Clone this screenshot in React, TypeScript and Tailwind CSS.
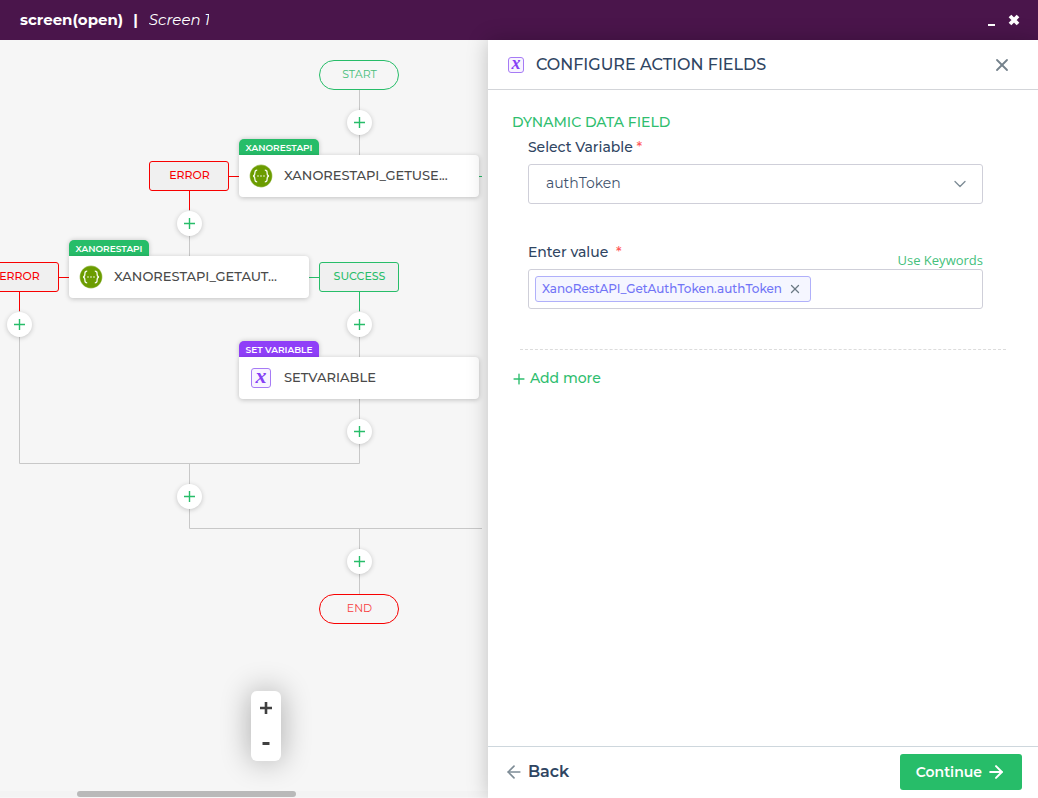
import { useState } from 'react';
import clsx from 'clsx';
import { ArrowLeft, ArrowRight, ChevronDown, Plus, X } from 'lucide-react';

type Point = { x: number; y: number };
type Tone = 'success' | 'error';
type Action = Point & { id: string; tag: string; title: string; kind: 'api' | 'variable' };

const terminals: (Point & { label: string; tone: Tone })[] = [
  { label: 'START', tone: 'success', x: 319, y: 20 },
  { label: 'END', tone: 'error', x: 319, y: 554 },
];

const branches: (Point & { label: string; tone: Tone })[] = [
  { label: 'ERROR', tone: 'error', x: 149, y: 121 },
  { label: 'ERROR', tone: 'error', x: -21, y: 222 },
  { label: 'SUCCESS', tone: 'success', x: 319, y: 222 },
];

const actions: Action[] = [
  { id: 'get-user', tag: 'XANORESTAPI', title: 'XANORESTAPI_GETUSE...', kind: 'api', x: 239, y: 99 },
  { id: 'get-auth', tag: 'XANORESTAPI', title: 'XANORESTAPI_GETAUT...', kind: 'api', x: 69, y: 200 },
  { id: 'set-variable', tag: 'SET VARIABLE', title: 'SETVARIABLE', kind: 'variable', x: 239, y: 301 },
];

const inserts: Point[] = [
  { x: 347, y: 70 },
  { x: 177, y: 171 },
  { x: 7, y: 272 },
  { x: 347, y: 272 },
  { x: 347, y: 379 },
  { x: 177, y: 444 },
  { x: 347, y: 509 },
];

const edges = [
  { color: '#c8c8c8', d: 'M359.5 50V115M189.5 170V216M19.5 271V423.5H359.5V359M359.5 271V317M189.5 423V488.5H482M359.5 488V554' },
  { color: '#f80000', d: 'M229 136.5H239M189.5 151V170M59 237.5H69M19.5 252V271' },
  { color: '#27bd69', d: 'M479 136.5H482M309 237.5H319M359.5 252V271' },
];

function VariableIcon({ small }: { small?: boolean }) {
  return (
    <span
      aria-hidden="true"
      className={clsx(
        'flex shrink-0 items-center justify-center rounded-[3px] border border-[#a67bf5] bg-[#f8f4ff] font-["Liberation_Serif",serif] font-bold text-[#8540f5] italic',
        small ? 'size-4 pb-[3px] text-lg leading-4' : 'size-5 pb-1 text-[22px] leading-5',
      )}
    >
      x
    </span>
  );
}

function ApiIcon() {
  return (
    <svg viewBox="0 0 24 24" className="size-6 shrink-0" aria-hidden="true">
      <circle cx="12" cy="12" r="11.4" fill="#a9c66b" />
      <circle cx="12" cy="12" r="10.8" fill="#6b9c00" />
      <g fill="none" stroke="#f4f8ea" strokeWidth="1.3">
        <path d="M8.2 6.2c-1.8 0-2.3.7-2.3 2.2 0 2.1.1 3.2-1.8 3.6 1.9.4 1.8 1.5 1.8 3.6 0 1.5.5 2.2 2.3 2.2" />
        <path d="M15.8 6.2c1.8 0 2.3.7 2.3 2.2 0 2.1-.1 3.2 1.8 3.6-1.9.4-1.8 1.5-1.8 3.6 0 1.5-.5 2.2-2.3 2.2" />
      </g>
      <g fill="#f4f8ea">
        <circle cx="9" cy="12" r=".8" />
        <circle cx="12" cy="12" r=".8" />
        <circle cx="15" cy="12" r=".8" />
      </g>
    </svg>
  );
}

function ActionCard({ action }: { action: Action }) {
  const isApi = action.kind === 'api';
  return (
    <div className="absolute w-60" style={{ left: action.x, top: action.y }}>
      <span
        className={clsx(
          'flex h-4 w-20 items-center justify-center rounded-t-[5px] pt-px text-[9px] font-semibold whitespace-nowrap text-white shadow-[0_0_5px_rgba(0,0,0,0.2)]',
          isApi ? 'bg-[#27bd69]' : 'bg-[#8f3ff8]',
        )}
      >
        {action.tag}
      </span>
      <button
        type="button"
        className="relative flex h-[42px] w-full items-center gap-2 rounded-b rounded-tr bg-white pl-2.5 text-left text-[13px] font-medium text-[#4a4a4a] shadow-[0_1px_5px_rgba(0,0,0,0.22)]"
      >
        <span className="flex w-6 justify-center">{isApi ? <ApiIcon /> : <VariableIcon />}</span>
        <span className="pl-[3px]">{action.title}</span>
      </button>
    </div>
  );
}

function FlowCanvas() {
  return (
    <section aria-label="Action flow" className="relative min-w-0 flex-1 overflow-hidden bg-[#f6f6f6]">
      <svg className="absolute top-0 left-0 h-[600px] w-[482px]" aria-hidden="true">
        {edges.map((edge) => (
          <path key={edge.color} d={edge.d} fill="none" stroke={edge.color} />
        ))}
      </svg>

      {terminals.map((node) => (
        <div
          key={node.label}
          className={clsx(
            'absolute flex h-[30px] w-20 items-center justify-center rounded-full border pb-0.5 pl-px text-[11px]',
            node.tone === 'success' ? 'border-[#27bd69] text-[#45bd79]' : 'border-[#f80000] text-[#f83c3c]',
          )}
          style={{ left: node.x, top: node.y }}
        >
          {node.label}
        </div>
      ))}

      {branches.map((node) => (
        <div
          key={`${node.x}-${node.y}`}
          className={clsx(
            'absolute flex h-[30px] w-20 items-center justify-center rounded-[3px] border bg-[#f0f0f0] pb-0.5 pl-px text-[11px] font-medium',
            node.tone === 'success' ? 'border-[#27bd69] text-[#27bd69]' : 'border-[#f80000] text-[#f80000]',
          )}
          style={{ left: node.x, top: node.y }}
        >
          {node.label}
        </div>
      ))}

      {actions.map((action) => (
        <ActionCard key={action.id} action={action} />
      ))}

      {inserts.map((point) => (
        <button
          key={`${point.x}-${point.y}`}
          type="button"
          aria-label="Add action"
          className="absolute flex size-[25px] items-center justify-center rounded-full bg-white text-[#27bd69] shadow-[0_1px_5px_rgba(0,0,0,0.2)]"
          style={{ left: point.x, top: point.y }}
        >
          <svg viewBox="0 0 11 11" className="size-[11px]" aria-hidden="true">
            <path d="M5.5 0V11M0 5.5H11" stroke="currentColor" strokeWidth="1.4" />
          </svg>
        </button>
      ))}

      {/* Zoom control */}
      <div className="absolute bottom-[37px] left-[251px] flex h-[70px] w-[30px] flex-col rounded-md bg-white pb-0.5 text-[#404040] shadow-[0_0_30px_rgba(0,0,0,0.32)]">
        <button type="button" aria-label="Zoom in" className="flex flex-1 items-center justify-center">
          <svg viewBox="0 0 12 12" className="size-3" aria-hidden="true">
            <path d="M6 0V12M0 6H12" stroke="currentColor" strokeWidth="2.6" />
          </svg>
        </button>
        <button type="button" aria-label="Zoom out" className="flex flex-1 items-center justify-center">
          <svg viewBox="0 0 12 12" className="size-3" aria-hidden="true">
            <path d="M2.5 7.5H9.5" stroke="currentColor" strokeWidth="3" />
          </svg>
        </button>
      </div>

      {/* Horizontal scroll track */}
      <div className="absolute inset-x-0 bottom-px h-1.5 bg-[#f3f3f3]">
        <div className="ml-[77px] h-full w-[219px] rounded-full bg-[#b9b9b9]" />
      </div>
    </section>
  );
}

function ConfigurePanel() {
  const [variable, setVariable] = useState('authToken');
  const [tokens, setTokens] = useState(['XanoRestAPI_GetAuthToken.authToken']);

  return (
    <aside className="relative flex w-[53%] shrink-0 flex-col bg-white text-[#2f4562] shadow-[0_0_20px_rgba(0,0,0,0.22)]">
      <header className="flex h-[50px] items-center gap-3 border-b border-[#d3d5d9] pr-[26px] pl-5">
        <VariableIcon small />
        <h2 className="flex-1 text-base leading-6 font-medium">CONFIGURE ACTION FIELDS</h2>
        <button type="button" aria-label="Close panel" className="text-[#75828c]">
          <X className="size-5" strokeWidth={2.2} />
        </button>
      </header>

      <div className="flex-1 px-6 pt-[22px]">
        <h3 className="text-sm leading-5 font-medium text-[#2fbe6f]">DYNAMIC DATA FIELD</h3>

        <div className="mt-1 pr-[31px] pl-4">
          <label htmlFor="variable" className="block text-sm leading-[22px] font-medium">
            Select Variable <span className="text-[#ff5a5a]">*</span>
          </label>
          <div className="relative mt-1.5">
            <select
              id="variable"
              value={variable}
              onChange={(e) => setVariable(e.target.value)}
              className="h-10 w-full appearance-none rounded-[3px] border border-[#cfcfd9] bg-white px-[17px] pb-0.5 text-sm text-[#3f526c]"
            >
              <option>authToken</option>
            </select>
            <ChevronDown
              className="pointer-events-none absolute top-2.5 right-[13px] size-5 text-[#7e8c96]"
              strokeWidth={1.6}
            />
          </div>

          <div className="mt-9 flex items-start justify-between">
            <label htmlFor="value" className="text-sm leading-6 font-medium">
              Enter value <span className="ml-1 text-[#ff5a5a]">*</span>
            </label>
            <a href="#keywords" className='mt-3 font-["Open_Sans",sans-serif] text-[13px] leading-[17px] text-[#45bf7c]'>
              Use Keywords
            </a>
          </div>
          <div className="flex h-10 items-center gap-2 rounded-[3px] border border-[#cfcfd9] px-1.5">
            {tokens.map((token) => (
              <span
                key={token}
                className="flex h-[26px] shrink-0 items-center gap-1.5 rounded-[3px] border border-[#b0b0fa] bg-[#f5f6ff] pr-2 pl-1.5 text-xs font-medium text-[#7174f6]"
              >
                {token}
                <button
                  type="button"
                  aria-label="Remove keyword"
                  className="text-[#6c7a84]"
                  onClick={() => setTokens(tokens.filter((t) => t !== token))}
                >
                  <X className="size-3.5" strokeWidth={2.2} />
                </button>
              </span>
            ))}
            <input id="value" type="text" className="min-w-0 flex-1 outline-none" />
          </div>
        </div>

        <hr className="mx-2 mt-10 border-dashed border-[#dcdcdc]" />

        <button type="button" className="mt-[18px] flex items-center gap-1 text-sm leading-5 font-medium text-[#2fbe6f]">
          <Plus className="mt-0.5 size-3.5" strokeWidth={2} viewBox="2 2 20 20" />
          Add more
        </button>
      </div>

      <footer className="flex h-[52px] items-center justify-between border-t border-[#ced7dd] px-4 pb-0.5">
        <button type="button" className="flex items-center gap-1 text-base font-semibold">
          <ArrowLeft className="size-5 text-[#7e8c96]" strokeWidth={2} />
          Back
        </button>
        <button
          type="button"
          className="flex h-9 items-center gap-1 rounded-[3px] bg-[#27bd69] px-4 text-sm font-semibold text-white"
        >
          Continue
          <ArrowRight className="size-5" strokeWidth={2.4} />
        </button>
      </footer>
    </aside>
  );
}

export default function App() {
  return (
    <div className="flex h-screen flex-col overflow-hidden font-[Montserrat,sans-serif]">
      <header className="flex h-10 shrink-0 items-center bg-[#4a154b] pr-[18px] pl-5 text-[15px] text-white">
        <h1 className="font-bold">screen(open)</h1>
        <span className="mr-[11px] ml-2.5 font-bold">|</span>
        <span className="w-[60px] overflow-hidden whitespace-nowrap italic">Screen 1</span>
        <div className="ml-auto flex items-center gap-3">
          <button type="button" aria-label="Minimize">
            <svg viewBox="0 0 8 12" className="h-3 w-2" aria-hidden="true">
              <path d="M0 11H7" stroke="currentColor" strokeWidth="2" />
            </svg>
          </button>
          <button type="button" aria-label="Close">
            <svg viewBox="0 0 12 12" className="size-3" aria-hidden="true">
              <path d="M2 2L10 10M10 2L2 10" stroke="currentColor" strokeWidth="3.8" />
            </svg>
          </button>
        </div>
      </header>

      <main className="flex min-h-0 flex-1">
        <FlowCanvas />
        <ConfigurePanel />
      </main>
    </div>
  );
}
